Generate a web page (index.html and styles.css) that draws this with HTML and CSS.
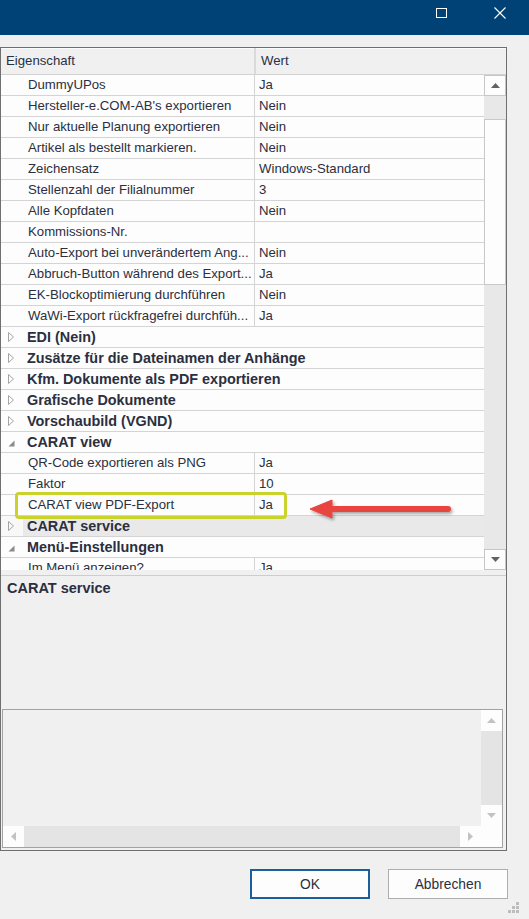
FILE: index.html
```html
<!DOCTYPE html>
<html lang="de">
<head>
  <meta charset="UTF-8">
  <meta name="viewport" content="width=device-width, initial-scale=1.0">
  <title>Export-Einstellungen</title>
  <link rel="stylesheet" href="styles.css">
</head>
<body>
  <div class="titlebar">
    <span class="title-btn">
      <svg width="11" height="11" viewBox="0 0 11 11"><rect x="0.5" y="1.5" width="10" height="9" fill="none" stroke="#fff"/></svg>
    </span>
    <span class="title-btn close">
      <svg width="12" height="12" viewBox="0 0 12 12"><path d="M0.5 0.5 L11.5 11.5 M11.5 0.5 L0.5 11.5" stroke="#fff" stroke-width="1.1"/></svg>
    </span>
  </div>

  <div class="panel">
    <div class="grid">
      <div class="grid-head">
        <div class="head-name">Eigenschaft</div>
        <div class="head-value">Wert</div>
      </div>
      <div class="grid-body">
        <div class="rows">
          <div class="row"><span class="gutter"></span><span class="name">DummyUPos</span><span class="value">Ja</span></div>
          <div class="row"><span class="gutter"></span><span class="name">Hersteller-e.COM-AB's exportieren</span><span class="value">Nein</span></div>
          <div class="row"><span class="gutter"></span><span class="name">Nur aktuelle Planung exportieren</span><span class="value">Nein</span></div>
          <div class="row"><span class="gutter"></span><span class="name">Artikel als bestellt markieren.</span><span class="value">Nein</span></div>
          <div class="row"><span class="gutter"></span><span class="name">Zeichensatz</span><span class="value">Windows-Standard</span></div>
          <div class="row"><span class="gutter"></span><span class="name">Stellenzahl der Filialnummer</span><span class="value">3</span></div>
          <div class="row"><span class="gutter"></span><span class="name">Alle Kopfdaten</span><span class="value">Nein</span></div>
          <div class="row"><span class="gutter"></span><span class="name">Kommissions-Nr.</span><span class="value"></span></div>
          <div class="row"><span class="gutter"></span><span class="name">Auto-Export bei unverändertem Ang...</span><span class="value">Nein</span></div>
          <div class="row"><span class="gutter"></span><span class="name">Abbruch-Button während des Export...</span><span class="value">Ja</span></div>
          <div class="row"><span class="gutter"></span><span class="name">EK-Blockoptimierung durchführen</span><span class="value">Nein</span></div>
          <div class="row"><span class="gutter"></span><span class="name">WaWi-Export rückfragefrei durchfüh...</span><span class="value">Ja</span></div>

          <div class="row cat"><span class="gutter"><svg class="exp" width="6" height="10" viewBox="0 0 6 10"><path d="M0.5 0.5 L5.5 5 L0.5 9.5 Z" fill="none" stroke="#a4a4a4"/></svg></span><span class="cat-title">EDI (Nein)</span></div>
          <div class="row cat"><span class="gutter"><svg class="exp" width="6" height="10" viewBox="0 0 6 10"><path d="M0.5 0.5 L5.5 5 L0.5 9.5 Z" fill="none" stroke="#a4a4a4"/></svg></span><span class="cat-title">Zusätze für die Dateinamen der Anhänge</span></div>
          <div class="row cat"><span class="gutter"><svg class="exp" width="6" height="10" viewBox="0 0 6 10"><path d="M0.5 0.5 L5.5 5 L0.5 9.5 Z" fill="none" stroke="#a4a4a4"/></svg></span><span class="cat-title">Kfm. Dokumente als PDF exportieren</span></div>
          <div class="row cat"><span class="gutter"><svg class="exp" width="6" height="10" viewBox="0 0 6 10"><path d="M0.5 0.5 L5.5 5 L0.5 9.5 Z" fill="none" stroke="#a4a4a4"/></svg></span><span class="cat-title">Grafische Dokumente</span></div>
          <div class="row cat"><span class="gutter"><svg class="exp" width="6" height="10" viewBox="0 0 6 10"><path d="M0.5 0.5 L5.5 5 L0.5 9.5 Z" fill="none" stroke="#a4a4a4"/></svg></span><span class="cat-title">Vorschaubild (VGND)</span></div>

          <div class="row cat"><span class="gutter"><svg class="exp open" width="7" height="7" viewBox="0 0 7 7"><path d="M6.5 0.5 L6.5 6.5 L0.5 6.5 Z" fill="#8a8a8a"/></svg></span><span class="cat-title">CARAT view</span></div>
          <div class="row"><span class="gutter"></span><span class="name">QR-Code exportieren als PNG</span><span class="value">Ja</span></div>
          <div class="row"><span class="gutter"></span><span class="name">Faktor</span><span class="value">10</span></div>
          <div class="row"><span class="gutter"></span><span class="name">CARAT view PDF-Export</span><span class="value">Ja</span></div>

          <div class="row cat selected"><span class="gutter"><svg class="exp" width="6" height="10" viewBox="0 0 6 10"><path d="M0.5 0.5 L5.5 5 L0.5 9.5 Z" fill="none" stroke="#a4a4a4"/></svg></span><span class="cat-title">CARAT service</span></div>

          <div class="row cat"><span class="gutter"><svg class="exp open" width="7" height="7" viewBox="0 0 7 7"><path d="M6.5 0.5 L6.5 6.5 L0.5 6.5 Z" fill="#8a8a8a"/></svg></span><span class="cat-title">Menü-Einstellungen</span></div>
          <div class="row"><span class="gutter"></span><span class="name">Im Menü anzeigen?</span><span class="value">Ja</span></div>
        </div>

        <div class="vscroll">
          <div class="sb-btn"><svg width="9" height="5" viewBox="0 0 9 5"><path d="M0 5 L4.5 0 L9 5 Z" fill="#626262"/></svg></div>
          <div class="sb-track"><div class="sb-thumb"></div></div>
          <div class="sb-btn"><svg width="9" height="5" viewBox="0 0 9 5"><path d="M0 0 L9 0 L4.5 5 Z" fill="#626262"/></svg></div>
        </div>
      </div>
    </div>

    <!-- Markierung und Pfeil auf der Zeile "CARAT view PDF-Export" -->
    <div class="mark"></div>
    <svg class="pointer" width="160" height="32" viewBox="0 0 160 32">
      <defs>
        <filter id="shade" x="-10%" y="-50%" width="120%" height="200%">
          <feDropShadow dx="1.5" dy="2" stdDeviation="1.4" flood-color="#000" flood-opacity="0.35"/>
        </filter>
      </defs>
      <g filter="url(#shade)" fill="#e8453f" stroke="#e8453f">
        <line x1="30" y1="14" x2="148" y2="14" stroke-width="6" stroke-linecap="round"/>
        <path d="M10 14 L32 5 L32 23 Z" stroke-width="1" stroke-linejoin="round"/>
      </g>
    </svg>

    <div class="desc"><strong>CARAT service</strong></div>

    <div class="textbox">
      <div class="tb-area"></div>
      <div class="tb-vscroll">
        <div class="sb-btn light"><svg width="9" height="5" viewBox="0 0 9 5"><path d="M0 5 L4.5 0 L9 5 Z" fill="#c2c2c2"/></svg></div>
        <div class="tb-track"></div>
        <div class="sb-btn light"><svg width="9" height="5" viewBox="0 0 9 5"><path d="M0 0 L9 0 L4.5 5 Z" fill="#c2c2c2"/></svg></div>
      </div>
      <div class="tb-hscroll">
        <div class="sb-btn light side"><svg width="5" height="9" viewBox="0 0 5 9"><path d="M5 0 L5 9 L0 4.5 Z" fill="#c2c2c2"/></svg></div>
        <div class="tb-track"></div>
        <div class="sb-btn light side"><svg width="5" height="9" viewBox="0 0 5 9"><path d="M0 0 L5 4.5 L0 9 Z" fill="#c2c2c2"/></svg></div>
      </div>
      <div class="tb-corner"></div>
    </div>
  </div>

  <div class="buttons">
    <button type="button" class="btn btn-default">OK</button>
    <button type="button" class="btn">Abbrechen</button>
  </div>

  <svg class="grip" width="11" height="11" viewBox="0 0 11 11">
    <rect x="8" y="0" width="3" height="3" fill="#bdbdbd"/>
    <rect x="4" y="4" width="3" height="3" fill="#bdbdbd"/>
    <rect x="8" y="4" width="3" height="3" fill="#bdbdbd"/>
    <rect x="0" y="8" width="3" height="3" fill="#bdbdbd"/>
    <rect x="4" y="8" width="3" height="3" fill="#bdbdbd"/>
    <rect x="8" y="8" width="3" height="3" fill="#bdbdbd"/>
  </svg>
</body>
</html>
```

FILE: styles.css
```css
body {
  margin: 0;
  height: 919px;
  overflow: hidden;
  position: relative;
  background-color: #f0f0f0;
  font-family: "Liberation Sans", Arial, sans-serif;
  font-size: 13.2px;
  color: #2b2f40;
}

/* window title bar */
.titlebar {
  height: 35px;
  background-color: #004275;
  display: flex;
  justify-content: flex-end;
}

.title-btn {
  width: 59px;
  display: flex;
  justify-content: center;
  align-items: flex-start;
  padding-top: 7px;
  box-sizing: border-box;
}

.title-btn.close {
  width: 58px;
}

/* property grid + description + text box */
.panel {
  position: relative;
  margin-top: 12px;
  width: 505px;
  border: 1px solid #6f6f6f;
  padding-bottom: 2px;
}

.grid-head {
  display: flex;
  height: 26px;
  line-height: 26px;
  background-color: #f0f0f0;
  border-bottom: 1px solid #d2d2d2;
  box-shadow: inset 0 1px 0 #fbfbfb;
}

.head-name {
  width: 248px;
  padding-left: 5px;
  border-right: 2px solid #dadada;
}

.head-value {
  padding-left: 5px;
}

.grid-body {
  display: flex;
  height: 495px;
  overflow: hidden;
}

.rows {
  width: 483px;
  background-color: #fdfdfd;
}

.row {
  display: flex;
  height: 20px;
  line-height: 20px;
  border-bottom: 1px solid #d4d4d4;
  white-space: nowrap;
}

.gutter {
  width: 22px;
  flex-shrink: 0;
  display: flex;
  align-items: center;
  padding-left: 7px;
  box-sizing: border-box;
}

.exp.open {
  margin-top: 3px;
}

.name {
  width: 226px;
  padding-left: 5px;
  border-right: 1px solid #d4d4d4;
  overflow: hidden;
}

.value {
  padding-left: 4px;
}

.cat-title {
  flex: 1;
  padding-left: 4px;
  font-size: 14.4px;
  font-weight: bold;
}

.row.selected .cat-title {
  background-color: #e9e9e9;
}

.row.selected .gutter {
  background-color: #f8f8f8;
}

/* scroll bars */
.vscroll {
  width: 22px;
  display: flex;
  flex-direction: column;
}

.sb-btn {
  height: 21px;
  flex-shrink: 0;
  display: flex;
  align-items: center;
  justify-content: center;
  background-color: #fdfdfd;
  border: 1px solid #c6c6c6;
  box-sizing: border-box;
}

.sb-btn.light {
  border: none;
}

.sb-btn.side {
  width: 21px;
  height: auto;
}

.sb-track {
  flex: 1;
  background-color: #e8e8e8;
  padding-top: 23px;
}

.sb-thumb {
  height: 166px;
  background-color: #fdfdfd;
  border: 1px solid #c9c9c9;
  box-sizing: border-box;
}

/* highlight frame and arrow */
.mark {
  position: absolute;
  left: 14px;
  top: 444px;
  width: 272px;
  height: 27px;
  border: 3px solid #c9d32b;
  border-radius: 4px;
  box-sizing: border-box;
}

.pointer {
  position: absolute;
  left: 299px;
  top: 447px;
}

.desc {
  margin-top: 5px;
  height: 134px;
  border-top: 1px solid #cdcdcd;
  padding: 3px 6px 0;
  line-height: 18px;
  font-size: 14.5px;
  box-sizing: border-box;
}

.textbox {
  margin-left: 1px;
  width: 501px;
  height: 139px;
  border: 1px solid #a2a2a2;
  box-sizing: border-box;
  display: grid;
  grid-template-columns: 1fr 21px;
  grid-template-rows: 1fr 21px;
  background-color: #f0f0f0;
}

.tb-vscroll {
  display: flex;
  flex-direction: column;
}

.tb-hscroll {
  display: flex;
}

.tb-track {
  flex: 1;
  background-color: #e4e4e4;
}

.tb-corner {
  background-color: #fdfdfd;
}

/* dialog buttons */
.buttons {
  display: flex;
  justify-content: flex-end;
  gap: 18px;
  margin-top: 18px;
  padding-right: 21px;
}

.btn {
  width: 120px;
  height: 30px;
  background-color: #fdfdfd;
  border: 1px solid #adadad;
  font-family: "Liberation Sans", Arial, sans-serif;
  font-size: 13.8px;
  color: #2b2f40;
  padding: 0;
}

.btn-default {
  border: 2px solid #1b5e9b;
}

.grip {
  position: absolute;
  left: 508px;
  top: 902px;
}
```
